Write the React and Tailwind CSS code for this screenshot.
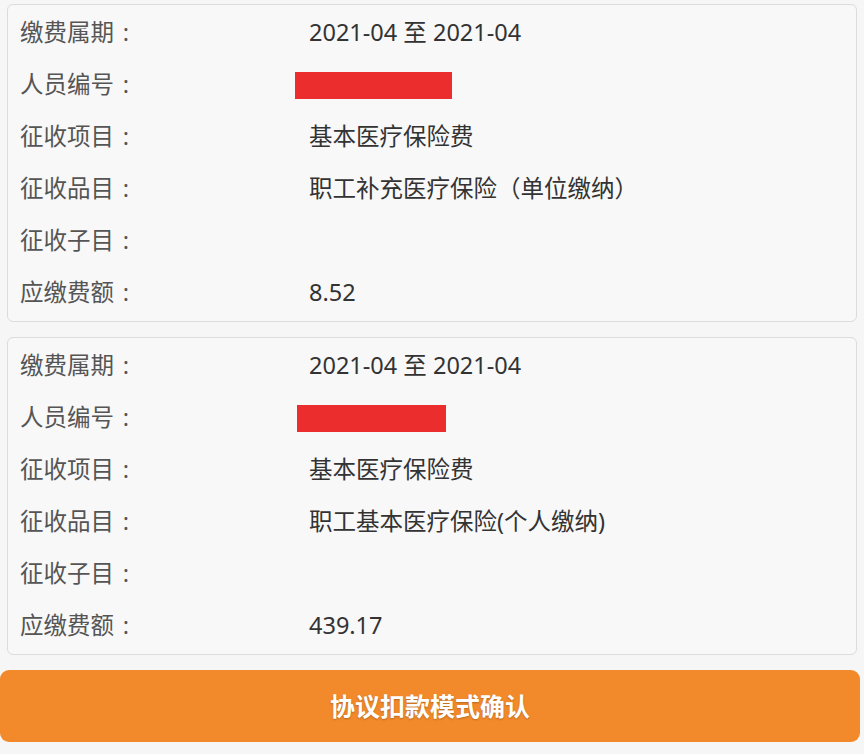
const records = [
  {
    period: '2021-04 至 2021-04',
    redWidth: 'w-[157px]',
    redOffset: 'ml-[-14px]',
    item: '基本医疗保险费',
    category: '职工补充医疗保险（单位缴纳）',
    sub: '',
    amount: '8.52',
  },
  {
    period: '2021-04 至 2021-04',
    redWidth: 'w-[149px]',
    redOffset: 'ml-[-12px]',
    item: '基本医疗保险费',
    category: '职工基本医疗保险(个人缴纳)',
    sub: '',
    amount: '439.17',
  },
]

function Row({ label, children }) {
  return (
    <div className="flex items-center h-[52px]">
      <span className="w-[289px] shrink-0 text-[#555555]">
        {label}
        <span className="inline-block w-[24px] text-center">:</span>
      </span>
      <span className="text-[#333333]">{children}</span>
    </div>
  )
}

function RecordCard({ rec }) {
  return (
    <div className="mx-[7px] rounded-md border border-[#dcdcdc] bg-[#f8f8f8] px-3 py-[2px]">
      <Row label="缴费属期">{rec.period}</Row>
      <Row label="人员编号">
        {/* redacted id */}
        <span className={`block h-[27px] bg-[#ec2d2d] ${rec.redWidth} ${rec.redOffset}`} />
      </Row>
      <Row label="征收项目">{rec.item}</Row>
      <Row label="征收品目">{rec.category}</Row>
      <Row label="征收子目">{rec.sub}</Row>
      <Row label="应缴费额">{rec.amount}</Row>
    </div>
  )
}

export default function App() {
  return (
    <div
      className="min-h-[754px] bg-[#f6f6f6] pt-[4px] text-[23.5px] leading-none"
      style={{ fontFamily: '"Noto Sans", "Noto Sans CJK SC", sans-serif' }}
    >
      <div className="flex flex-col gap-[15px]">
        {records.map((rec, i) => (
          <RecordCard key={i} rec={rec} />
        ))}
      </div>

      {/* Confirm button */}
      <div className="pt-[15px] pr-[4px]">
        <button className="w-full h-[72px] rounded-[9px] bg-[#f28a2b] text-white text-[25px] font-bold [text-shadow:0_1px_2px_rgba(0,0,0,0.25)]">
          协议扣款模式确认
        </button>
      </div>
    </div>
  )
}
